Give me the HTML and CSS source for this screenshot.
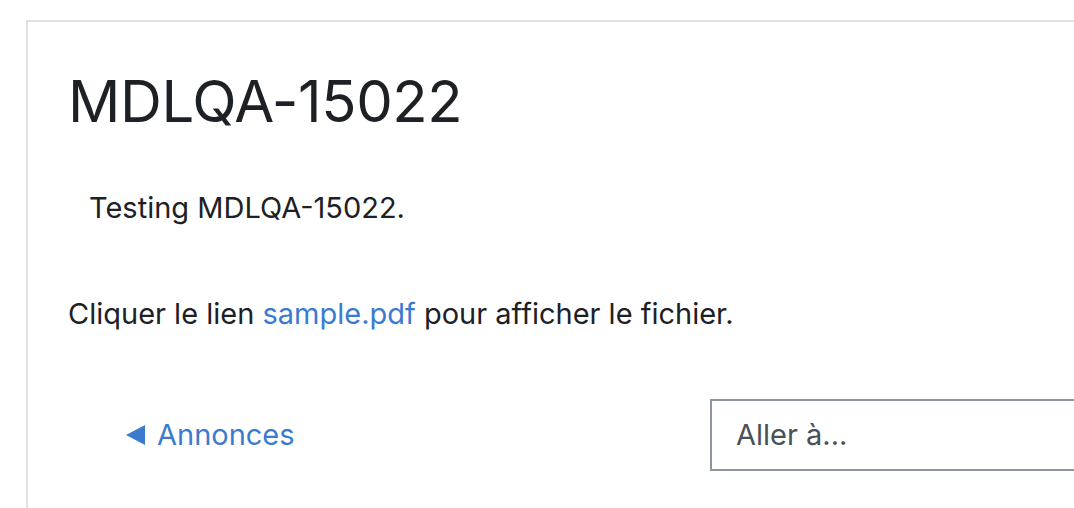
FILE: index.html
```html
<!DOCTYPE html>
<html lang="fr">
<head>
    <meta charset="UTF-8">
    <meta name="viewport" content="width=device-width, initial-scale=1.0">
    <title>MDLQA-15022</title>
    <link rel="stylesheet" href="styles.css">
</head>
<body>
    <div class="carte">
        <h2 class="titre">MDLQA-15022</h2>

        <div class="intro">
            <p>Testing MDLQA-15022.</p>
        </div>

        <p class="lien-fichier">Cliquer le lien <a href="#">sample.pdf</a> pour afficher le fichier.</p>

        <div class="navigation">
            <a href="#" class="precedent"><span class="fleche"></span>Annonces</a>
            <div class="aller">Aller à...</div>
        </div>
    </div>
</body>
</html>
```

FILE: styles.css
```css
html, body {
    height: 100%;
    overflow: hidden;
}
body {
    font-family: Inter, "Liberation Sans", sans-serif;
    color: #1d2125;
    background-color: #ffffff;
    margin: 0;
    padding: 20px 0 0 26px;
    box-sizing: border-box;
}
.carte {
    width: 1100px;
    height: 600px;
    border: 2px solid #dee2e6;
    padding: 30px 40px;
}
.titre {
    font-size: 58px;
    font-weight: 400;
    letter-spacing: -0.4px;
    margin: 15px 0 0 0;
    line-height: 1.2;
}
.intro {
    padding-left: 21px;
    font-size: 29px;
    margin-top: 53px;
}
.intro p {
    margin: 0;
}
.lien-fichier {
    font-size: 29px;
    margin: 71px 0 0 0;
}
a {
    color: #3a7bd0;
    text-decoration: none;
}
.navigation {
    display: flex;
    align-items: center;
    justify-content: space-between;
    margin-top: 68px;
    width: 1100px;
}
.precedent {
    display: flex;
    align-items: center;
    font-size: 29px;
    margin-left: 58px;
}
.fleche {
    width: 0;
    height: 0;
    border-top: 10px solid transparent;
    border-bottom: 10px solid transparent;
    border-right: 19px solid #3a7bd0;
    margin-right: 12px;
}
.aller {
    font-size: 29px;
    color: #495057;
    border: 2px solid #8f959e;
    width: 400px;
    height: 68px;
    line-height: 68px;
    padding-left: 24px;
    margin-right: 30px;
}
```
